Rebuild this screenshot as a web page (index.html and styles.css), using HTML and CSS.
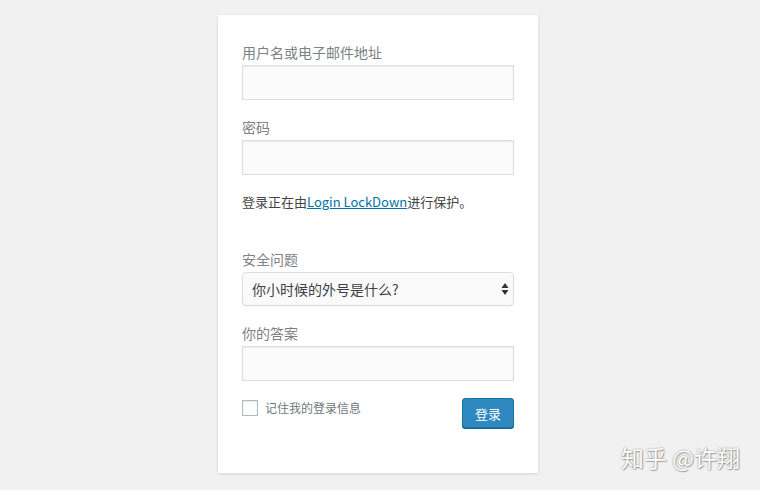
FILE: index.html
```html
<!DOCTYPE html>
<html lang="zh">
<head>
<meta charset="utf-8">
<title>登录</title>
<link rel="stylesheet" href="styles.css">
</head>
<body>
<div class="page">
  <form class="card">
    <label class="label">用户名或电子邮件地址</label>
    <input class="field" type="text">
    <label class="label">密码</label>
    <input class="field" type="password">
    <p class="note">登录正在由<a href="#" class="link">Login LockDown</a>进行保护。</p>
    <label class="label">安全问题</label>
    <div class="select-wrap">
      <select class="select"><option>你小时候的外号是什么?</option></select>
      <svg class="arrows" width="8" height="14" viewBox="0 0 8 14"><path d="M4 1 L7.5 6 H0.5 Z M4 13 L7.5 8 H0.5 Z" fill="#333"/></svg>
    </div>
    <label class="label">你的答案</label>
    <input class="field" type="text">
    <div class="bottom">
      <label class="remember"><span class="box"></span>记住我的登录信息</label>
      <button type="button" class="btn">登录</button>
    </div>
  </form>
</div>
<div class="watermark">知乎 @许翔</div>
</body>
</html>
```

FILE: styles.css
```css
html, body {
  margin: 0;
  padding: 0;
  background: #f1f1f1;
  font-family: "Noto Sans CJK SC", "Noto Sans", "Liberation Sans", sans-serif;
  width: 760px;
  height: 490px;
  overflow: hidden;
}
.page {
  padding: 15px 0 0 218px;
}
.card {
  width: 320px;
  box-sizing: border-box;
  background: #fff;
  box-shadow: 0 1px 3px rgba(0,0,0,0.13);
  padding: 28px 24px 45px;
  display: flex;
  flex-direction: column;
}
.label {
  display: block;
  font-size: 14px;
  line-height: 19px;
  color: #7c8186;
}
.field {
  display: block;
  box-sizing: border-box;
  width: 272px;
  height: 35px;
  margin: 3px 0 18px;
  border: 1px solid #ddd;
  background: #fbfbfb;
  box-shadow: inset 0 1px 2px rgba(0,0,0,0.07);
  outline: none;
}
.note {
  margin: -1px 0 39px;
  font-size: 13px;
  line-height: 19px;
  color: #444;
}
.link {
  color: #0073aa;
  text-decoration: underline;
}
.select-wrap {
  position: relative;
  margin: 3px 0 18px;
}
.select {
  appearance: none;
  -webkit-appearance: none;
  display: block;
  box-sizing: border-box;
  width: 272px;
  height: 34px;
  border: 1px solid #ddd;
  border-radius: 4px;
  background: #fafafa;
  box-shadow: 0 1px 1px rgba(0,0,0,0.04);
  padding: 0 9px;
  font-family: "Noto Sans CJK SC", "Noto Sans", sans-serif;
  font-size: 14px;
  color: #3c4146;
  outline: none;
}
.arrows {
  position: absolute;
  right: 5px;
  top: 10px;
}
.bottom {
  display: flex;
  justify-content: space-between;
  align-items: flex-start;
  margin-top: -1px;
}
.remember {
  display: flex;
  align-items: center;
  gap: 7px;
  font-size: 12px;
  line-height: 16px;
  color: #72777c;
  margin-top: 2px;
}
.box {
  width: 16px;
  height: 16px;
  box-sizing: border-box;
  border: 1px solid #b4b9be;
  background: #fff;
  box-shadow: inset 0 1px 2px rgba(0,0,0,0.1);
}
.btn {
  width: 52px;
  height: 30px;
  background: #2f88c0;
  border: 1px solid #1e6fa6;
  border-radius: 3px;
  box-shadow: 0 1px 0 #1b6597;
  color: #fff;
  font-family: "Noto Sans CJK SC", "Noto Sans", sans-serif;
  font-size: 13px;
  padding: 0;
}
.watermark {
  position: absolute;
  left: 621px;
  top: 442px;
  font-size: 23px;
  line-height: 30px;
  color: #fff;
  text-shadow: 0 0 2px rgba(0,0,0,0.45), 1px 1px 1px rgba(0,0,0,0.25);
  font-family: "Noto Sans CJK SC", sans-serif;
}
```
